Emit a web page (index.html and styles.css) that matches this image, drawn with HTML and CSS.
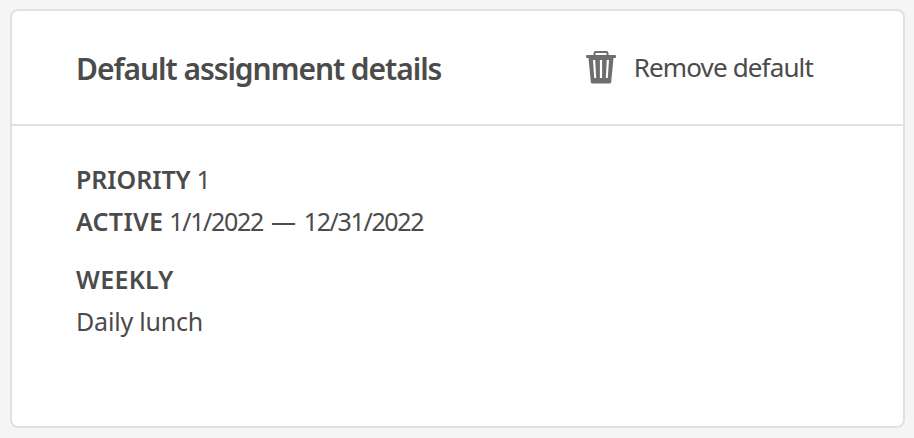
FILE: index.html
```html
<!DOCTYPE html>
<html lang="en">
<head>
<meta charset="utf-8">
<title>Default assignment details</title>
<link rel="stylesheet" href="styles.css">
</head>
<body>
<section class="card">
  <header class="card-header">
    <h1 class="title">Default assignment details</h1>
    <button class="action" type="button">
      <svg class="icon" viewBox="0 0 30 33" aria-hidden="true">
        <path fill="none" stroke="#6e6e6e" stroke-width="2" d="M8.500 4V2.200Q8.500 1 9.700 1h10.600Q21.500 1 21.500 2.200V4"/>
        <path fill="#6e6e6e" fill-rule="evenodd" d="M1 4h28q1 0 1 1v1q0 1-1 1h-1.500L25.200 31q-.1 1.500-1.600 1.500H6.400q-1.500 0-1.600-1.500L2.500 7H1Q0 7 0 6V5q0-1 1-1zM7 9l1.200 18h2L9.200 9zM13.900 9v18h2.200V9zM20.800 9l-1 18h2L23 9z"/>
      </svg>
      <span class="label">Remove default</span>
    </button>
  </header>
  <div class="card-body">
    <p class="row"><b class="key">PRIORITY</b><span class="value">1</span></p>
    <p class="row"><b class="key key-wide">ACTIVE</b><span class="value dates"><span class="date">1/1/2022</span><span>—</span><span class="date">12/31/2022</span></span></p>
    <p class="row group"><b class="key key-wide">WEEKLY</b></p>
    <p class="row"><span class="value">Daily lunch</span></p>
  </div>
</section>
</body>
</html>
```

FILE: styles.css
```css
* { box-sizing: border-box; }
body {
  margin: 0;
  height: 438px;
  padding: 9px 9px 10px 10px;
  background: #f5f5f5;
  color: #4b4b4b;
  font-family: "Noto Sans", sans-serif;
}
.card {
  height: 419px;
  background: #fff;
  border: 2px solid #e1e1e1;
  border-radius: 8px;
}
.card-header {
  display: flex;
  align-items: center;
  justify-content: space-between;
  height: 115px;
  padding: 0 90px 0 64px;
  border-bottom: 2px solid #e1e1e1;
}
.title { margin: 2px 0 0; font-size: 30px; font-weight: 600; letter-spacing: -1.05px; white-space: nowrap; }
.action {
  display: flex;
  align-items: center;
  gap: 18px;
  padding: 0;
  border: 0;
  background: none;
  color: inherit;
  font: 26px "Noto Sans", sans-serif;
  white-space: nowrap;
}
.label { margin-top: -2px; letter-spacing: -0.86px; }
.icon { width: 30px; height: 33px; }
.card-body { padding: 32px 64px; font-size: 25px; }
.row { display: flex; gap: 6px; height: 42px; margin: 0; line-height: 42px; white-space: nowrap; }
.group { margin-top: 16px; }
.key { font-weight: 600; letter-spacing: -0.05px; }
.key-wide { letter-spacing: 0.3px; }
.value { letter-spacing: -0.2px; }
.dates { display: flex; gap: 8px; }
.date { letter-spacing: -1.35px; }
```
